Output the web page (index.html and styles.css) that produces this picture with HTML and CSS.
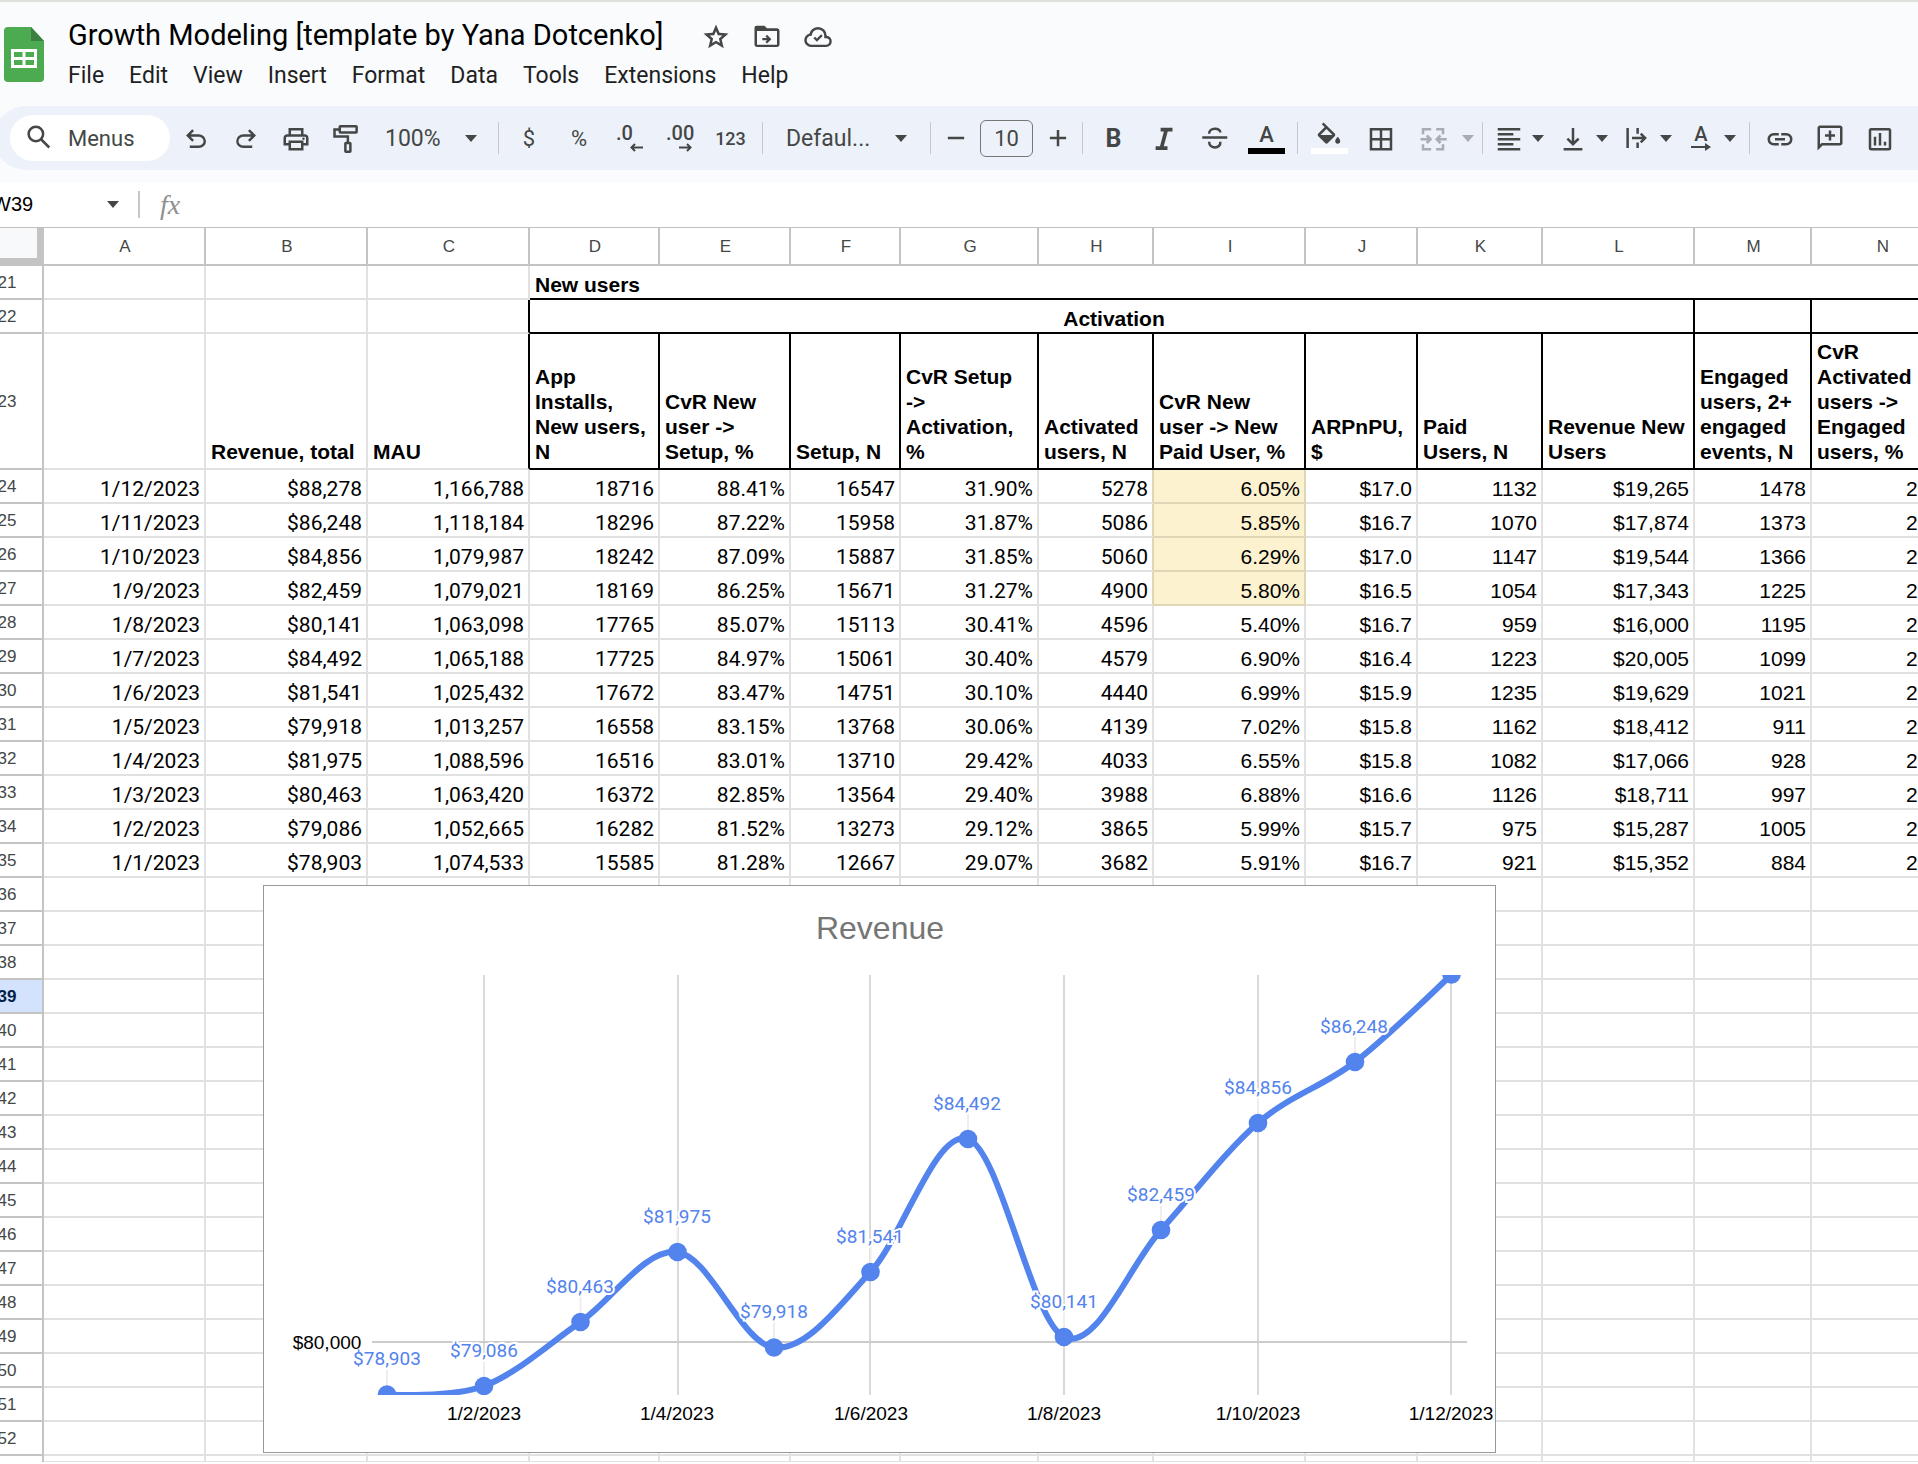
FILE: index.html
```html
<!DOCTYPE html>
<html lang="en">
<head>
<meta charset="utf-8">
<title>Growth Modeling [template by Yana Dotcenko]</title>
<link rel="stylesheet" href="styles.css">
</head>
<body>
<header class="app-header">
  <div class="brand-row">
    <svg class="logo" viewBox="0 0 40 55" aria-hidden="true">
      <path fill="#4caa50" d="M4 0h23l13 14v37a4 4 0 0 1-4 4H4a4 4 0 0 1-4-4V4a4 4 0 0 1 4-4z"/>
      <path fill="#3b8040" d="M27 0l13 14H27z"/>
      <path fill="#fff" fill-rule="evenodd" d="M7 22h26v19H7zM10 25v5h8.500v-5zM21.500 25v5H30v-5zM10 33v5h8.500v-5zM21.500 33v5H30v-5z"/>
    </svg>
    <div class="doc">
      <div class="title-row">
        <h1 class="doc-title">Growth Modeling [template by Yana Dotcenko]</h1>
        <div class="title-actions">
          <button class="plain" aria-label="Star"><svg class="icon" viewBox="0 -960 960 960"><path d="M354-287l126-76 126 77-33-144 111-96-146-13-58-136-58 135-146 13 111 97-33 143ZM233-120l65-281L80-590l288-25 112-265 112 265 288 25-218 189 65 281-247-149-247 149Z"/></svg></button>
          <button class="plain" aria-label="Move"><svg class="icon" viewBox="0 -960 960 960"><path d="M480-270l140-140-140-140-50 50 54 55H330v70h154l-54 55 50 50ZM160-160q-33 0-56.500-23.500T80-240v-540q0-60 60-60h260l80 80h320q33 0 56.500 23.500T880-680v440q0 33-23.500 56.500T800-160H160Zm0-70h640v-440H160v440Z"/></svg></button>
          <button class="plain" aria-label="Document status"><svg class="icon" viewBox="0 -960 960 960"><path d="M444-330l186-186-50-50-136 136-60-60-50 50 110 110ZM260-160q-91 0-155.500-63T40-377q0-78 47-139t123-78q25-92 100-149t170-57q117 0 198.500 81.500T760-520q69 8 114.500 59.500T920-340q0 75-52.500 127.500T740-160H260Zm0-75h480q42 0 73-31t31-74q0-42-31-73t-73-31h-60v-76q0-83-58.500-141.500T480-720q-83 0-141.500 58.500T280-520h-20q-58 0-99 41t-41 99q0 58 41 101t99 44Z"/></svg></button>
        </div>
      </div>
      <nav class="menu-bar">
        <button class="plain">File</button>
        <button class="plain">Edit</button>
        <button class="plain">View</button>
        <button class="plain">Insert</button>
        <button class="plain">Format</button>
        <button class="plain">Data</button>
        <button class="plain">Tools</button>
        <button class="plain">Extensions</button>
        <button class="plain">Help</button>
      </nav>
    </div>
  </div>

  <div class="toolbar" role="toolbar">
    <label class="menu-search">
      <svg class="icon line" viewBox="0 0 24 24"><circle cx="9.500" cy="8.800" r="5.800"/><path d="M13.800 13.200l6.400 6.400"/></svg>
      <input type="text" placeholder="Menus" aria-label="Search the menus">
    </label>
    <button class="tool" aria-label="Undo"><svg class="icon" viewBox="0 -1000 960 960"><path d="M280-200v-80h284q63 0 109.500-40T720-420q0-60-46.500-100T564-560H312l104 104-56 56-200-200 200-200 56 56-104 104h252q97 0 163.500 63T800-420q0 94-66.500 157T564-200H280Z"/></svg></button>
    <button class="tool" aria-label="Redo"><svg class="icon" viewBox="0 -1000 960 960"><path d="M396-200q-97 0-163.500-63T166-420q0-94 66.500-157T396-640h252L544-744l56-56 200 200-200 200-56-56 104-104H396q-63 0-109.500 40T240-420q0 60 46.500 100T396-280h284v80H396Z"/></svg></button>
    <button class="tool" aria-label="Print"><svg class="icon" viewBox="0 -1000 960 960"><path d="M640-640v-120H320v120h-80v-200h480v200h-80Zm80 180q17 0 28.500-11.500T760-500q0-17-11.500-28.500T720-540q-17 0-28.500 11.500T680-500q0 17 11.500 28.500T720-460Zm-80 260v-160H320v160h320Zm80 80H240v-160H80v-240q0-51 35-85.500t85-34.500h560q51 0 85.500 34.500T880-520v240H720v160Zm80-240v-160q0-17-11.500-28.500T760-560H200q-17 0-28.500 11.500T160-520v160h80v-80h480v80h80Z"/></svg></button>
    <button class="tool" aria-label="Paint format"><svg class="icon line" viewBox="0 -1 24 24"><rect x="7" y="1.500" width="13.500" height="5" rx=".5"/><path d="M7 4.200H2.800v5.600H13.500v5.200"/><rect x="11.500" y="15" width="4" height="7" rx=".4"/></svg></button>
    <div class="pick zoom-pick">
      <select aria-label="Zoom"><option>100%</option></select>
      <svg class="arrow" viewBox="0 0 12 7"><path d="M0 0h12L6 7z"/></svg>
    </div>
    <span class="sep"></span>
    <button class="tool glyph" aria-label="Format as currency">$</button>
    <button class="tool glyph" aria-label="Format as percent">%</button>
    <button class="tool decimal" aria-label="Decrease decimal places">.0<svg viewBox="0 0 14 9"><path d="M14 4.500H2.500M6 1L2.500 4.500 6 8"/></svg></button>
    <button class="tool decimal" aria-label="Increase decimal places">.00<svg viewBox="0 0 14 9"><path d="M0 4.500h11.500M8 1l3.500 3.500L8 8"/></svg></button>
    <button class="tool digits" aria-label="More formats">123</button>
    <span class="sep"></span>
    <div class="pick font-pick">
      <select aria-label="Font"><option>Defaul...</option></select>
      <svg class="arrow" viewBox="0 0 12 7"><path d="M0 0h12L6 7z"/></svg>
    </div>
    <span class="sep"></span>
    <button class="tool step" aria-label="Decrease font size"><svg class="icon line" viewBox="0 0 24 24"><path d="M5.500 12h13"/></svg></button>
    <input class="size-box" type="text" value="10" aria-label="Font size">
    <button class="tool step" aria-label="Increase font size"><svg class="icon line" viewBox="0 0 24 24"><path d="M5.500 12h13M12 5.500v13"/></svg></button>
    <span class="sep"></span>
    <button class="tool style bold" aria-label="Bold">B</button>
    <button class="tool style" aria-label="Italic"><svg class="icon line thick" viewBox="0 -1 24 24"><path d="M8.500 4.200H18M4.500 19H14M13 4.500l-4 15"/></svg></button>
    <button class="tool style" aria-label="Strikethrough"><svg class="icon line" viewBox="1 0 24 24"><path d="M2 11.500h20M7.500 8.500C7.500 3.500 16.500 3.500 16.500 7.500M7.500 15c0 6 9.500 6 9 0"/></svg></button>
    <button class="tool style swatch" aria-label="Text color"><span class="letter">A</span><span class="bar black"></span></button>
    <span class="sep"></span>
    <button class="tool cell swatch" aria-label="Fill color"><svg class="fill" viewBox="0 0 24 17"><path d="M16.560 8.940L7.620 0 6.210 1.410l2.380 2.380-5.150 5.150c-.59.59-.59 1.540 0 2.120l5.500 5.500c.29.290.680.440 1.060.440s.77-.15 1.060-.44l5.500-5.500c.59-.58.59-1.530 0-2.120zM5.210 10L10 5.210 14.790 10H5.210zM19 11.500s-2 2.170-2 3.500c0 1.100.9 2 2 2s2-.9 2-2c0-1.330-2-3.500-2-3.500z"/></svg><span class="bar white"></span></button>
    <button class="tool cell" aria-label="Borders"><svg class="icon line" viewBox="0 -1 24 24"><path d="M4 4h16v16H4zM12 4v16M4 12h16"/></svg></button>
    <button class="tool cell" aria-label="Merge cells" disabled><svg class="icon line" viewBox="0 -1 24 24"><path d="M10.500 4H4v4M10.500 20H4v-4M14.500 4H20v4M14.500 20H20v-4M2 12h8M7 9l3 3-3 3M23 12h-8M18 9l-3 3 3 3"/></svg></button>
    <button class="tool merge-more" aria-label="Select merge type" disabled><svg class="arrow" viewBox="0 0 12 7"><path d="M0 0h12L6 7z"/></svg></button>
    <span class="sep"></span>
    <button class="tool more" aria-label="Horizontal align"><svg class="icon line" viewBox="0 -1 24 24"><path d="M3 4h18M3 8h12.500M3 12h18M3 16h12.500M3 20h18"/></svg><svg class="arrow" viewBox="0 0 12 7"><path d="M0 0h12L6 7z"/></svg></button>
    <button class="tool more" aria-label="Vertical align"><svg class="icon line" viewBox="0 -1 24 24"><path d="M4.500 20h15M12 3v12M7.500 11.500L12 16l4.500-4.500"/></svg><svg class="arrow" viewBox="0 0 12 7"><path d="M0 0h12L6 7z"/></svg></button>
    <button class="tool more" aria-label="Text wrapping"><svg class="icon line" viewBox="0 0 24 24"><path d="M4.500 4v16M12.500 4v4.500M12.500 15.500V20M8 12h10M15 8.500l3.500 3.500-3.500 3.500"/></svg><svg class="arrow" viewBox="0 0 12 7"><path d="M0 0h12L6 7z"/></svg></button>
    <button class="tool more rotate" aria-label="Text rotation"><span class="turned">A<svg viewBox="0 0 20 8"><path d="M0 4h15"/><path class="head" d="M14 0l6 4-6 4z"/></svg></span><svg class="arrow" viewBox="0 0 12 7"><path d="M0 0h12L6 7z"/></svg></button>
    <span class="sep"></span>
    <button class="tool" aria-label="Insert link"><svg class="icon" viewBox="0 -1000 960 960"><path d="M440-280H280q-83 0-141.500-58.500T80-480q0-83 58.500-141.500T280-680h160v80H280q-50 0-85 35t-35 85q0 50 35 85t85 35h160v80ZM320-440v-80h320v80H320Zm200 160v-80h160q50 0 85-35t35-85q0-50-35-85t-85-35H520v-80h160q83 0 141.500 58.500T880-480q0 83-58.500 141.500T680-280H520Z"/></svg></button>
    <button class="tool" aria-label="Insert comment"><svg class="icon" viewBox="0 -960 960 960"><path d="M440-400h80v-120h120v-80H520v-120h-80v120H320v80h120v120ZM80-80v-720q0-33 23.500-56.500T160-880h640q33 0 56.500 23.500T880-800v480q0 33-23.500 56.500T800-240H240L80-80Zm126-240h594v-480H160v525l46-45Z"/></svg></button>
    <button class="tool" aria-label="Insert chart"><svg class="icon line" viewBox="0 -1 24 24"><rect x="4" y="4" width="16" height="16" rx="1"/><path d="M8 10v7M12 7v10M16 14v3"/></svg></button>
  </div>
</header>

<div class="formula-bar">
  <input class="name-box" type="text" value="W39" aria-label="Name box">
  <svg class="arrow" viewBox="0 0 12 7"><path d="M0 0h12L6 7z"/></svg>
  <span class="bar-sep"></span>
  <label class="fx" for="formula">fx</label>
  <input class="formula" id="formula" type="text">
</div>

<main class="sheet">
<table class="grid">
<colgroup><col class="w-head"><col class="w-162"><col class="w-162"><col class="w-162"><col class="w-130"><col class="w-131"><col class="w-110"><col class="w-138"><col class="w-115"><col class="w-152"><col class="w-112"><col class="w-125"><col class="w-152"><col class="w-117"><col class="w-142"></colgroup>
<thead>
<tr><td class="corner"></td><th>A</th><th>B</th><th>C</th><th>D</th><th>E</th><th>F</th><th>G</th><th>H</th><th>I</th><th>J</th><th>K</th><th>L</th><th>M</th><th>N</th></tr>
</thead>
<tbody>
<tr><th>21</th><td></td><td></td><td></td><td class="label ink-b" colspan="11">New users</td></tr>
<tr><th>22</th><td></td><td></td><td class="ink-r"></td><td class="label mid ink-b ink-r" colspan="9">Activation</td><td class="ink-b ink-r"></td><td class="ink-b ink-r"></td></tr>
<tr class="titles"><th>23</th><td></td><td>Revenue, total</td><td class="ink-r">MAU</td><td class="ink-b ink-r">App<br>Installs,<br>New users,<br>N</td><td class="ink-b ink-r">CvR New<br>user -&gt;<br>Setup, %</td><td class="ink-b ink-r">Setup, N</td><td class="ink-b ink-r">CvR Setup<br>-&gt;<br>Activation,<br>%</td><td class="ink-b ink-r">Activated<br>users, N</td><td class="ink-b ink-r">CvR New<br>user -&gt; New<br>Paid User, %</td><td class="ink-b ink-r">ARPnPU,<br>$</td><td class="ink-b ink-r">Paid<br>Users, N</td><td class="ink-b ink-r">Revenue New<br>Users</td><td class="ink-b ink-r">Engaged<br>users, 2+<br>engaged<br>events, N</td><td class="ink-b ink-r">CvR<br>Activated<br>users -&gt;<br>Engaged<br>users, %</td></tr>
<tr class="marked"><th>24</th><td>1/12/2023</td><td>$88,278</td><td>1,166,788</td><td>18716</td><td>88.41%</td><td>16547</td><td>31.90%</td><td>5278</td><td>6.05%</td><td>$17.0</td><td>1132</td><td>$19,265</td><td>1478</td><td>28%</td></tr>
<tr class="marked"><th>25</th><td>1/11/2023</td><td>$86,248</td><td>1,118,184</td><td>18296</td><td>87.22%</td><td>15958</td><td>31.87%</td><td>5086</td><td>5.85%</td><td>$16.7</td><td>1070</td><td>$17,874</td><td>1373</td><td>27%</td></tr>
<tr class="marked"><th>26</th><td>1/10/2023</td><td>$84,856</td><td>1,079,987</td><td>18242</td><td>87.09%</td><td>15887</td><td>31.85%</td><td>5060</td><td>6.29%</td><td>$17.0</td><td>1147</td><td>$19,544</td><td>1366</td><td>27%</td></tr>
<tr class="marked"><th>27</th><td>1/9/2023</td><td>$82,459</td><td>1,079,021</td><td>18169</td><td>86.25%</td><td>15671</td><td>31.27%</td><td>4900</td><td>5.80%</td><td>$16.5</td><td>1054</td><td>$17,343</td><td>1225</td><td>25%</td></tr>
<tr><th>28</th><td>1/8/2023</td><td>$80,141</td><td>1,063,098</td><td>17765</td><td>85.07%</td><td>15113</td><td>30.41%</td><td>4596</td><td>5.40%</td><td>$16.7</td><td>959</td><td>$16,000</td><td>1195</td><td>26%</td></tr>
<tr><th>29</th><td>1/7/2023</td><td>$84,492</td><td>1,065,188</td><td>17725</td><td>84.97%</td><td>15061</td><td>30.40%</td><td>4579</td><td>6.90%</td><td>$16.4</td><td>1223</td><td>$20,005</td><td>1099</td><td>24%</td></tr>
<tr><th>30</th><td>1/6/2023</td><td>$81,541</td><td>1,025,432</td><td>17672</td><td>83.47%</td><td>14751</td><td>30.10%</td><td>4440</td><td>6.99%</td><td>$15.9</td><td>1235</td><td>$19,629</td><td>1021</td><td>23%</td></tr>
<tr><th>31</th><td>1/5/2023</td><td>$79,918</td><td>1,013,257</td><td>16558</td><td>83.15%</td><td>13768</td><td>30.06%</td><td>4139</td><td>7.02%</td><td>$15.8</td><td>1162</td><td>$18,412</td><td>911</td><td>22%</td></tr>
<tr><th>32</th><td>1/4/2023</td><td>$81,975</td><td>1,088,596</td><td>16516</td><td>83.01%</td><td>13710</td><td>29.42%</td><td>4033</td><td>6.55%</td><td>$15.8</td><td>1082</td><td>$17,066</td><td>928</td><td>23%</td></tr>
<tr><th>33</th><td>1/3/2023</td><td>$80,463</td><td>1,063,420</td><td>16372</td><td>82.85%</td><td>13564</td><td>29.40%</td><td>3988</td><td>6.88%</td><td>$16.6</td><td>1126</td><td>$18,711</td><td>997</td><td>25%</td></tr>
<tr><th>34</th><td>1/2/2023</td><td>$79,086</td><td>1,052,665</td><td>16282</td><td>81.52%</td><td>13273</td><td>29.12%</td><td>3865</td><td>5.99%</td><td>$15.7</td><td>975</td><td>$15,287</td><td>1005</td><td>26%</td></tr>
<tr><th>35</th><td>1/1/2023</td><td>$78,903</td><td>1,074,533</td><td>15585</td><td>81.28%</td><td>12667</td><td>29.07%</td><td>3682</td><td>5.91%</td><td>$16.7</td><td>921</td><td>$15,352</td><td>884</td><td>24%</td></tr>
<tr><th>36</th><td></td><td></td><td></td><td></td><td></td><td></td><td></td><td></td><td></td><td></td><td></td><td></td><td></td><td></td></tr>
<tr><th>37</th><td></td><td></td><td></td><td></td><td></td><td></td><td></td><td></td><td></td><td></td><td></td><td></td><td></td><td></td></tr>
<tr><th>38</th><td></td><td></td><td></td><td></td><td></td><td></td><td></td><td></td><td></td><td></td><td></td><td></td><td></td><td></td></tr>
<tr><th class="current">39</th><td></td><td></td><td></td><td></td><td></td><td></td><td></td><td></td><td></td><td></td><td></td><td></td><td></td><td></td></tr>
<tr><th>40</th><td></td><td></td><td></td><td></td><td></td><td></td><td></td><td></td><td></td><td></td><td></td><td></td><td></td><td></td></tr>
<tr><th>41</th><td></td><td></td><td></td><td></td><td></td><td></td><td></td><td></td><td></td><td></td><td></td><td></td><td></td><td></td></tr>
<tr><th>42</th><td></td><td></td><td></td><td></td><td></td><td></td><td></td><td></td><td></td><td></td><td></td><td></td><td></td><td></td></tr>
<tr><th>43</th><td></td><td></td><td></td><td></td><td></td><td></td><td></td><td></td><td></td><td></td><td></td><td></td><td></td><td></td></tr>
<tr><th>44</th><td></td><td></td><td></td><td></td><td></td><td></td><td></td><td></td><td></td><td></td><td></td><td></td><td></td><td></td></tr>
<tr><th>45</th><td></td><td></td><td></td><td></td><td></td><td></td><td></td><td></td><td></td><td></td><td></td><td></td><td></td><td></td></tr>
<tr><th>46</th><td></td><td></td><td></td><td></td><td></td><td></td><td></td><td></td><td></td><td></td><td></td><td></td><td></td><td></td></tr>
<tr><th>47</th><td></td><td></td><td></td><td></td><td></td><td></td><td></td><td></td><td></td><td></td><td></td><td></td><td></td><td></td></tr>
<tr><th>48</th><td></td><td></td><td></td><td></td><td></td><td></td><td></td><td></td><td></td><td></td><td></td><td></td><td></td><td></td></tr>
<tr><th>49</th><td></td><td></td><td></td><td></td><td></td><td></td><td></td><td></td><td></td><td></td><td></td><td></td><td></td><td></td></tr>
<tr><th>50</th><td></td><td></td><td></td><td></td><td></td><td></td><td></td><td></td><td></td><td></td><td></td><td></td><td></td><td></td></tr>
<tr><th>51</th><td></td><td></td><td></td><td></td><td></td><td></td><td></td><td></td><td></td><td></td><td></td><td></td><td></td><td></td></tr>
<tr><th>52</th><td></td><td></td><td></td><td></td><td></td><td></td><td></td><td></td><td></td><td></td><td></td><td></td><td></td><td></td></tr>
<tr class="edge"><th></th><td></td><td></td><td></td><td></td><td></td><td></td><td></td><td></td><td></td><td></td><td></td><td></td><td></td><td></td></tr>
</tbody>
</table>

<figure class="chart">
  <svg viewBox="0 0 1231 566" role="img" aria-label="Revenue by date">
    <defs><clipPath id="plot"><rect x="108" y="89" width="1100" height="420"/></clipPath></defs>
    <text class="chart-title" x="616" y="53">Revenue</text>
    <g class="rules">
      <path d="M220 89v420M414 89v420M606 89v420M800 89v420M994 89v420M1187 89v420"/>
      <path class="level" d="M108 456h1095"/>
    </g>
    <g class="stems">
      <path d="M123 480v20M220 472v20M316.500 408v20M413.500 338v20M510 433v20M606.500 358v20M704 225v20M800 423v20M897 316v20M994 209v20M1091 148v20"/>
    </g>
    <g clip-path="url(#plot)">
      <path class="curve" d="M123 508.500C123 508.500 187.800 512.100 220 500C252.200 487.900 284.300 458.300 316.500 436C348.700 413.700 381.300 361.800 413.500 366C445.700 370.200 477.800 458.100 510 461.500C542.200 464.900 574.300 420.700 606.500 386C638.700 351.300 671.800 242.200 704 253C736.200 263.800 767.800 435.800 800 451C832.200 466.200 864.800 379.700 897 344C929.200 308.300 961.800 265 994 237C1026.200 209 1058.800 200.700 1091 176C1123.200 151.300 1187.500 88.500 1187.500 88.500"/>
      <g class="dots">
        <circle cx="123" cy="508.500" r="9.300"/><circle cx="220" cy="500" r="9.300"/><circle cx="316.500" cy="436" r="9.300"/><circle cx="413.500" cy="366" r="9.300"/><circle cx="510" cy="461.500" r="9.300"/><circle cx="606.500" cy="386" r="9.300"/><circle cx="704" cy="253" r="9.300"/><circle cx="800" cy="451" r="9.300"/><circle cx="897" cy="344" r="9.300"/><circle cx="994" cy="237" r="9.300"/><circle cx="1091" cy="176" r="9.300"/><circle cx="1187.500" cy="88.500" r="9.300"/>
      </g>
    </g>
    <g class="values">
      <text x="123" y="479">$78,903</text><text x="220" y="471">$79,086</text><text x="316" y="407">$80,463</text><text x="413" y="337">$81,975</text><text x="510" y="432">$79,918</text><text x="606" y="357">$81,541</text><text x="703" y="224">$84,492</text><text x="800" y="422">$80,141</text><text x="897" y="315">$82,459</text><text x="994" y="208">$84,856</text><text x="1090" y="147">$86,248</text>
    </g>
    <g class="ticks">
      <text x="63" y="463">$80,000</text><text x="220" y="534">1/2/2023</text><text x="413" y="534">1/4/2023</text><text x="607" y="534">1/6/2023</text><text x="800" y="534">1/8/2023</text><text x="994" y="534">1/10/2023</text><text x="1187" y="534">1/12/2023</text>
    </g>
  </svg>
</figure>
</main>
</body>
</html>
```
FILE: styles.css
```css
* { box-sizing: border-box; }

body {
  margin: 0;
  min-height: 100vh;
  overflow: hidden;
  background: #fff;
  color: #000;
  font-family: Roboto, "Liberation Sans", sans-serif;
}

button, input, select {
  margin: 0;
  padding: 0;
  border: 0;
  background: none;
  color: #444746;
  font: inherit;
  outline: none;
}

.app-header {
  border-top: 2px solid #dfe1dd;
  padding: 15px 0 13px;
  background: #f9fbfd;
}

.brand-row { display: flex; gap: 24px; padding-left: 4px; padding-bottom: 15px; }
.logo { width: 40px; height: 55px; margin-top: 10px; flex: none; }
.doc { display: flex; flex-direction: column; gap: 6px; }
.title-row { display: flex; align-items: center; gap: 38px; height: 36px; }
.doc-title { margin: 0; font-size: 29px; font-weight: 400; line-height: 36px; white-space: nowrap; }
.title-actions { display: flex; gap: 21px; padding-top: 4px; }
.title-actions .plain { display: flex; }
.menu-bar { display: flex; gap: 25px; height: 32px; font-size: 23px; }
.menu-bar .plain { color: #1f1f1f; }

.icon { display: block; width: 30px; height: 30px; fill: #444746; flex: none; }
.icon.line { fill: none; stroke: #444746; stroke-width: 2; }
.icon.thick { stroke-width: 3; }
.arrow { display: block; width: 12px; height: 7px; fill: #444746; flex: none; }

.toolbar {
  display: flex;
  align-items: center;
  height: 64px;
  margin-left: -6px;
  padding-left: 16px;
  border-radius: 32px 0 0 32px;
  background: #edf2fa;
  overflow: hidden;
}
.menu-search {
  display: flex;
  align-items: center;
  gap: 14px;
  width: 160px;
  height: 46px;
  margin-right: 1px;
  padding-left: 14px;
  border-radius: 23px;
  background: #fff;
  flex: none;
}
.menu-search input { width: 80px; font-size: 22px; }
.menu-search input::placeholder { color: #444746; opacity: 1; }

.tool {
  display: flex;
  align-items: center;
  justify-content: center;
  width: 50px;
  height: 48px;
  flex: none;
}
.tool.glyph { font-size: 22px; }
.tool.digits { width: 53px; font-size: 18px; font-weight: 500; }
.tool.step { width: 39px; }
.tool.style { width: 51px; }
.tool.cell { width: 52px; }
.tool.bold { font-size: 25px; font-weight: 700; }
.tool.merge-more { width: 18px; }
.tool.more { width: 64px; justify-content: flex-start; gap: 8px; padding-left: 6px; }
.tool:disabled { opacity: .4; }

.tool.decimal {
  flex-direction: column;
  align-items: flex-start;
  padding: 0 11px 2px 12px;
  font-size: 20px;
  font-weight: 500;
  line-height: 20px;
}
.decimal svg { width: 14px; height: 9px; align-self: flex-end; fill: none; stroke: #444746; stroke-width: 2; }

.tool.swatch { flex-direction: column; gap: 4px; }
.swatch .letter { height: 22px; font-size: 22px; font-weight: 500; line-height: 26px; }
.swatch .fill { width: 30px; height: 22px; fill: #444746; }
.bar { width: 37px; height: 6px; }
.bar.black { background: #000; }
.bar.white { background: #fff; }

.turned { display: flex; flex-direction: column; align-items: center; width: 30px; font-size: 20px; font-weight: 500; line-height: 18px; }
.turned svg { width: 22px; height: 8px; fill: none; stroke: #444746; stroke-width: 2; }
.turned .head { fill: #444746; stroke: none; }

.sep { width: 1px; height: 32px; margin: 0 5px; background: #c7c7c7; flex: none; }

.pick { display: grid; align-items: center; flex: none; }
.pick > * { grid-area: 1 / 1; }
.pick select { width: 100%; height: 44px; appearance: none; font-size: 23px; }
.pick .arrow { justify-self: end; pointer-events: none; }
.zoom-pick { width: 122px; padding: 0 16px 0 14px; }
.font-pick { width: 157px; padding: 0 18px 0 18px; }

.size-box {
  width: 53px;
  height: 37px;
  margin: 0 5px;
  border: 1px solid #747775;
  border-radius: 6px;
  font-size: 22px;
  text-align: center;
  flex: none;
}

.formula-bar {
  display: flex;
  align-items: center;
  height: 45px;
  padding-bottom: 1px;
  border-bottom: 1px solid #c0c0c0;
  overflow: hidden;
}
.name-box { width: 115px; margin-left: -8px; color: #000; font-family: "Liberation Sans", Arial, sans-serif; font-size: 20px; flex: none; }
.bar-sep { width: 2px; height: 27px; margin: 0 20px 0 19px; background: #c7c7c7; }
.fx { color: #8f8f8f; font: italic 28px "Liberation Serif", serif; }
.formula { flex: 1; min-width: 0; margin-left: 12px; font-size: 20px; }

.sheet { position: relative; overflow: hidden; }

.grid {
  width: 1982px;
  margin-left: -28px;
  table-layout: fixed;
  border-collapse: separate;
  border-spacing: 0;
  font-size: 21px;
  line-height: 25px;
}
.w-head { width: 72px; }
.w-110 { width: 110px; }
.w-112 { width: 112px; }
.w-115 { width: 115px; }
.w-117 { width: 117px; }
.w-125 { width: 125px; }
.w-130 { width: 130px; }
.w-131 { width: 131px; }
.w-138 { width: 138px; }
.w-142 { width: 142px; }
.w-152 { width: 152px; }
.w-162 { width: 162px; }

.grid td {
  height: 34px;
  padding: 0 4px;
  border-right: 2px solid #e1e1e1;
  border-bottom: 2px solid #e1e1e1;
  text-align: right;
  vertical-align: bottom;
}
.grid th {
  padding: 0;
  border-right: 2px solid #c4c4c4;
  border-bottom: 2px solid #c4c4c4;
  color: #444746;
  font-family: "Liberation Sans", Arial, sans-serif;
  font-size: 17px;
  font-weight: 400;
  text-align: center;
  vertical-align: middle;
}
.grid thead th { height: 38px; padding-left: 2px; }
.grid .corner { border-right: 7px solid #c4c4c4; border-bottom: 8px solid #c4c4c4; background: #f8f9fa; }
.grid .current { background: #d3e3fd; color: #041e49; font-weight: 700; }

.grid td:nth-child(n+10) { padding-bottom: 1px; font-family: "Liberation Sans", Arial, sans-serif; }
.grid .label, .titles td { padding: 0 0 1px 5px; font-family: "Liberation Sans", Arial, sans-serif; font-weight: 700; text-align: left; white-space: nowrap; }
.grid .mid { text-align: center; }
.grid .titles td { height: 136px; padding: 0 0 4px 5px; }
.grid .ink-b { border-bottom-color: #000; }
.grid .ink-r { border-right-color: #000; }

.marked td:nth-child(10) { background: #fdf2d0; border-color: #ded6b4; }
.marked td:nth-child(9) { border-right-color: #ded6b4; }

.grid .edge td { height: 6px; padding: 0; border-bottom-width: 1px; line-height: 0; }
.grid .edge th { border-bottom: 0; }

.chart {
  position: absolute;
  left: 263px;
  top: 657px;
  width: 1233px;
  height: 568px;
  margin: 0;
  border: 1px solid #999;
  background: #fff;
}
.chart svg { display: block; width: 100%; height: 100%; }
.chart text { text-anchor: middle; }
.chart-title { fill: #757575; font: 32px "Liberation Sans", Arial, sans-serif; }
.rules path { stroke: #dadada; stroke-width: 2; }
.rules .level { stroke: #ccc; }
.stems path { stroke: #eee; stroke-width: 2; }
.curve { fill: none; stroke: #5383ec; stroke-width: 6; }
.dots { fill: #5383ec; }
.values { fill: #5383ec; stroke: #fff; stroke-width: 4px; paint-order: stroke; font-size: 19px; }
.ticks { font: 19px "Liberation Sans", Arial, sans-serif; }
```
